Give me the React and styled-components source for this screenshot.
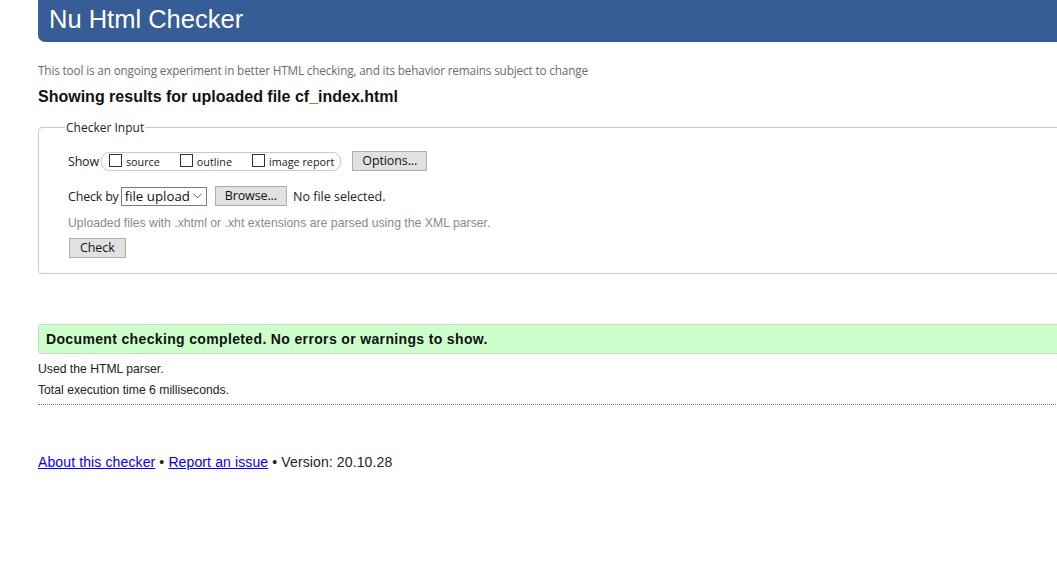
import React from 'react';
import styled, { createGlobalStyle } from 'styled-components';

const GlobalStyle = createGlobalStyle`
    html, body {
        margin: 0;
        padding: 0;
        background: #fff;
        overflow: hidden;
    }
    body {
        font-family: "Liberation Sans", Arial, sans-serif;
        color: #222;
    }
`;

const Page = styled.div`
    width: 1100px;
    margin-left: 38px;
`;

const Header = styled.header`
    background: #365d95;
    height: 42px;
    border-bottom-left-radius: 7px;
    display: flex;
    align-items: center;
    padding-left: 11px;

    h1 {
        margin: 0;
        color: #fff;
        font-weight: normal;
        font-size: 25.5px;
        line-height: 1;
        padding-bottom: 3px;
    }
`;

const Intro = styled.p`
    margin: 20px 0 0;
    font-family: "Open Sans", sans-serif;
    font-size: 11.75px;
    color: #6b6b6b;
    letter-spacing: -0.15px;
`;

const Title = styled.h2`
    margin: 10px 0 0;
    font-size: 16px;
    font-weight: bold;
    color: #111;
`;

const Fieldset = styled.fieldset`
    margin: 13px 0 0;
    padding: 14px 29px 15px;
    border: 1px solid #c9c9c9;
    border-radius: 4px;
    font-family: "Open Sans", sans-serif;
    font-size: 12.5px;
    color: #222;

    legend {
        padding: 0 1px;
        margin-left: -3px;
        font-size: 12px;
    }
`;

const Row = styled.div`
    display: flex;
    align-items: center;
    height: 22px;
    margin-bottom: ${p => p.$mb || 0}px;
`;

const Label = styled.span`
    margin-right: ${p => p.$mr || 3}px;
    letter-spacing: -0.2px;
`;

const Pill = styled.span`
    display: flex;
    align-items: center;
    height: 17px;
    border: 1px solid #c9c9c9;
    border-radius: 8px;
    padding: 0 6px 0 7px;
    margin-right: 11px;
`;

const Option = styled.label`
    display: flex;
    align-items: center;
    font-size: 10.8px;
    margin-right: ${p => p.$mr || 0}px;

    span.box {
        width: 11px;
        height: 11px;
        border: 1px solid #333;
        background: #fff;
        margin-right: 4px;
        margin-top: -2px;
    }
`;

const Button = styled.button`
    font-family: "Open Sans", sans-serif;
    font-size: 12.5px;
    color: #111;
    background: #e1e1e1;
    border: 1px solid #adadad;
    height: 20px;
    padding: 0 ${p => p.$px || 9}px;
    line-height: 1;
    margin: 0 ${p => p.$mr || 0}px 0 ${p => p.$ml || 0}px;
    letter-spacing: -0.1px;
`;

const Select = styled.span`
    display: flex;
    align-items: center;
    justify-content: space-between;
    width: 86px;
    height: 19px;
    box-sizing: border-box;
    border: 1px solid #7a7a7a;
    padding: 0 4px 0 3px;
    font-size: 13.3px;
    margin-right: 8px;
    color: #111;
`;

const Hint = styled.p`
    margin: 9px 0 8px;
    font-family: "Liberation Sans", Arial, sans-serif;
    font-size: 12.25px;
    color: #8a8a8a;
`;

const Success = styled.div`
    margin-top: 50px;
    height: 28px;
    display: flex;
    align-items: center;
    padding-left: 7px;
    background: #ccffcc;
    border: 1px solid #c4dcc4;
    border-radius: 3px;
    font-size: 14px;
    font-weight: bold;
    color: #111;
    letter-spacing: 0.35px;
`;

const Details = styled.div`
    margin-top: 8px;
    padding-bottom: 0;
    border-bottom: 1px dotted #777;
    font-size: 12.2px;
    color: #222;

    p {
        margin: 0 0 7px;
        line-height: 14px;
    }
`;

const Footer = styled.p`
    margin: 49px 0 0;
    font-size: 14px;
    color: #222;
    letter-spacing: 0.12px;

    a {
        color: #0000ee;
        text-decoration: underline;
    }
`;

const Chevron = () => (
    <svg width="9" height="6" viewBox="0 0 9 6">
        <path d="M0.5 0.8 L4.5 4.8 L8.5 0.8" fill="none" stroke="#555" strokeWidth="1" />
    </svg>
);

const App = () => (
    <Page>
        <GlobalStyle />
        <Header>
            <h1>Nu Html Checker</h1>
        </Header>
        <Intro>This tool is an ongoing experiment in better HTML checking, and its behavior remains subject to change</Intro>
        <Title>Showing results for uploaded file cf_index.html</Title>
        <Fieldset>
            <legend>Checker Input</legend>
            <Row $mb={13}>
                <Label $mr={2}>Show</Label>
                <Pill>
                    <Option $mr={20}><span className="box" />source</Option>
                    <Option $mr={20}><span className="box" />outline</Option>
                    <Option><span className="box" />image report</Option>
                </Pill>
                <Button $px={9}>Options...</Button>
            </Row>
            <Row>
                <Label $mr={2}>Check by</Label>
                <Select>file upload <Chevron /></Select>
                <Button $px={9} $mr={6}>Browse...</Button>
                <span>No file selected.</span>
            </Row>
            <Hint>Uploaded files with .xhtml or .xht extensions are parsed using the XML parser.</Hint>
            <Button $px={10} $ml={1}>Check</Button>
        </Fieldset>
        <Success>Document checking completed. No errors or warnings to show.</Success>
        <Details>
            <p>Used the HTML parser.</p>
            <p>Total execution time 6 milliseconds.</p>
        </Details>
        <Footer>
            <a href="#about">About this checker</a> • <a href="#report">Report an issue</a> • Version: 20.10.28
        </Footer>
    </Page>
);

export default App;
